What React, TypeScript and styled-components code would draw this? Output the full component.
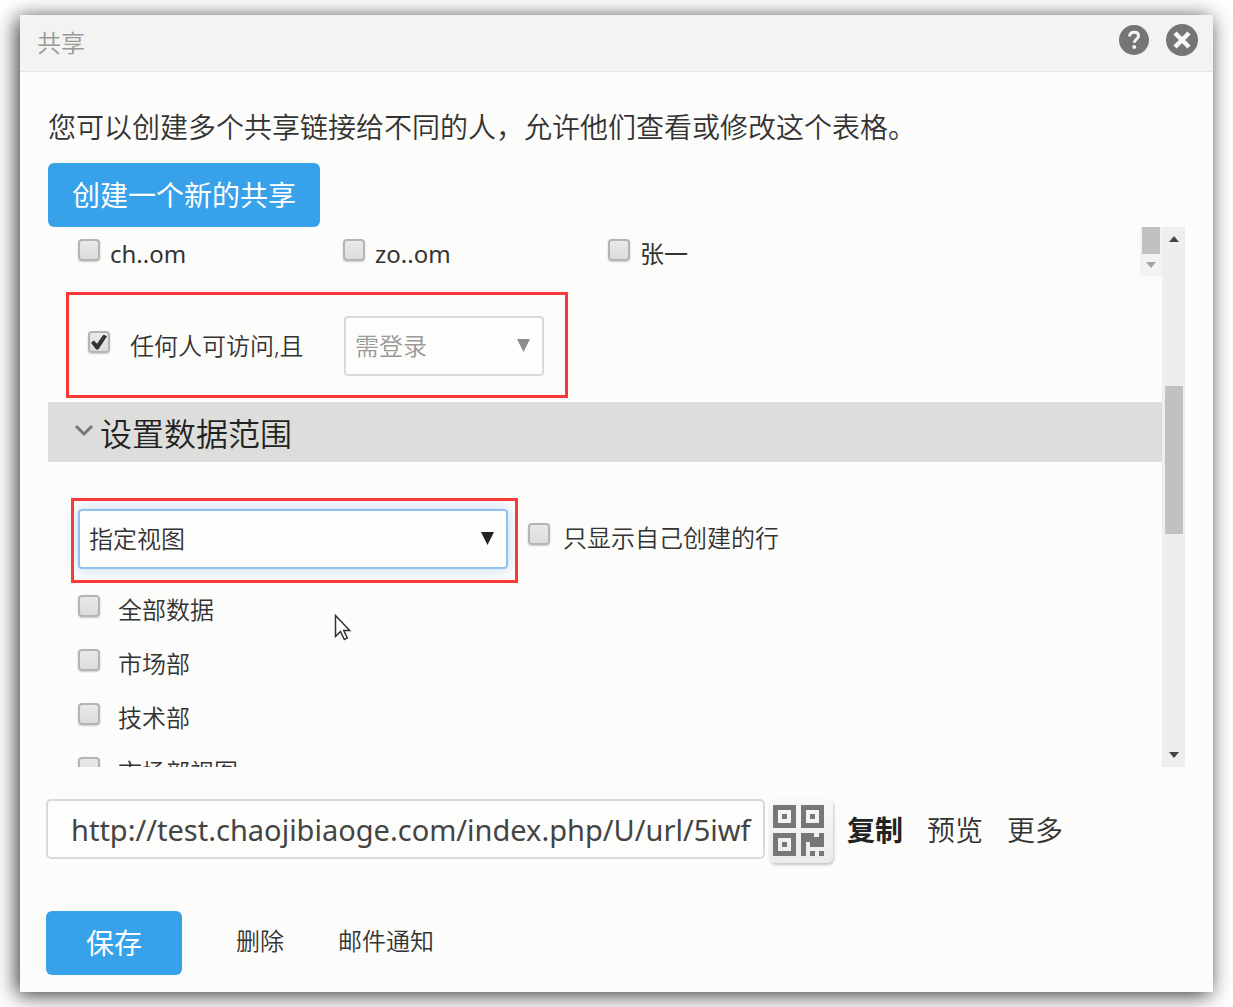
import React from "react";
import styled, { createGlobalStyle, css } from "styled-components";

const GlobalStyle = createGlobalStyle`
  *, *::before, *::after { box-sizing: border-box; }
  body {
    margin: 0;
    background: #fff;
    color: #333;
    font-family: "Noto Sans", "Noto Sans CJK SC", sans-serif;
    font-weight: 350;
    font-size: 24px;
    line-height: 36px;
  }
  button, input, select { font: inherit; color: inherit; }
`;

const Page = styled.div`
  padding: 15px 20px;
`;

const Dialog = styled.main`
  position: relative;
  background: #fcfcfa;
  box-shadow: -3px 3px 20px rgba(0, 0, 0, 0.8);
`;

const Header = styled.header`
  display: flex;
  align-items: center;
  justify-content: space-between;
  height: 57px;
  padding: 0 15px 6px 17px;
  background: #f3f3f1;
  border-bottom: 1px solid #e4e4e2;
`;

const Title = styled.h1`
  margin: 0;
  padding-top: 6px;
  font-size: 24px;
  font-weight: 350;
  color: #999;
`;

const HeaderActions = styled.div`
  display: flex;
  align-items: center;
  gap: 17px;
`;

const IconButton = styled.button<{ $size: number }>`
  display: flex;
  width: ${(p) => p.$size}px;
  height: ${(p) => p.$size}px;
  padding: 0;
  border: 0;
  background: none;
`;

const Body = styled.div`
  padding: 35px 28px 17px 26px;
`;

const Upper = styled.section`
  padding-left: 2px;
`;

const Intro = styled.p`
  margin: 0 0 16px;
  font-size: 28px;
  line-height: 40px;
`;

const PrimaryButton = styled.button<{ $wide?: boolean }>`
  display: block;
  height: 64px;
  padding: 0 ${(p) => (p.$wide ? 40 : 24)}px;
  border: 0;
  border-radius: 6px;
  background: #37a1ea;
  color: #fff;
  font-size: 28px;
  font-weight: 400;
`;

const ScrollPanel = styled.div`
  position: relative;
  display: flex;
  height: 540px;
  overflow: hidden;
`;

const PanelContent = styled.div`
  flex: 1;
  min-width: 0;
`;

const MemberArea = styled.div`
  display: flex;
  height: 65px;
`;

const MemberList = styled.div`
  flex: 1;
  display: grid;
  grid-template-columns: repeat(auto-fill, 265px);
  align-content: start;
  padding: 9px 0 0 30px;
  font-weight: 400;
`;

const CheckLabel = styled.label<{ $gap: number }>`
  display: flex;
  align-items: center;
  gap: ${(p) => p.$gap}px;
  white-space: nowrap;
`;

const CheckBox = styled.input`
  appearance: none;
  flex: none;
  display: grid;
  place-items: center;
  width: 22px;
  height: 22px;
  margin: 0 0 8px;
  border: 2px solid #b4b4b4;
  border-radius: 4px;
  background: linear-gradient(#e9e9e7, #dcdcda);
  box-shadow: 0 1px 2px rgba(0, 0, 0, 0.2);

  &:checked::before {
    content: "";
    width: 16px;
    height: 15px;
    background: #333;
    clip-path: polygon(0 55%, 18% 40%, 38% 62%, 78% 0, 100% 12%, 46% 100%, 32% 100%);
  }
`;

const Marked = styled.div<{ $kind: "access" | "view" }>`
  display: flex;
  align-items: center;
  border: 3px solid #fb3838;
  ${(p) =>
    p.$kind === "access"
      ? css`
          width: 502px;
          height: 106px;
          margin-left: 18px;
          padding: 2px 21px 0 19px;
          justify-content: space-between;
        `
      : css`
          width: 447px;
          height: 85px;
          padding: 0 7px 4px 4px;
        `}
`;

const SelectWrap = styled.div<{ $width?: number }>`
  position: relative;
  ${(p) => (p.$width ? `width: ${p.$width}px;` : "flex: 1;")}
`;

const Select = styled.select<{ $active?: boolean }>`
  appearance: none;
  display: block;
  width: 100%;
  height: 60px;
  padding: 0 40px 0 9px;
  border: 2px solid ${(p) => (p.$active ? "#8fc2ee" : "#d9d9d7")};
  border-radius: 4px;
  outline: 0;
  background: #fdfdfb;
  color: ${(p) => (p.$active ? "#333" : "#999")};
  opacity: 1;
  box-shadow: ${(p) => (p.$active ? "0 0 14px rgba(82, 150, 236, 0.35)" : "none")};
`;

const Arrow = styled.svg<{ $active?: boolean }>`
  position: absolute;
  top: 23px;
  right: 14px;
  fill: ${(p) => (p.$active ? "#222" : "#8c8c8c")};
  pointer-events: none;
`;

const SectionHead = styled.h2`
  display: flex;
  align-items: center;
  gap: 6px;
  height: 60px;
  margin: 4px 0 0;
  padding: 4px 0 0 26px;
  background: #dddddc;
  color: #222;
  font-size: 32px;
  font-weight: 350;
`;

const Chevron = styled.svg`
  margin-bottom: 6px;
`;

const ViewRow = styled.div`
  display: flex;
  align-items: center;
  gap: 10px;
  padding: 36px 0 0 23px;

  > label { padding-bottom: 6px; }
`;

const ViewList = styled.ul`
  margin: 0;
  padding: 0 0 0 30px;
  list-style: none;
`;

const ViewItem = styled.li`
  display: flex;
  align-items: center;
  height: 54px;
`;

const OuterTrack = styled.div`
  display: flex;
  flex-direction: column;
  align-items: center;
  justify-content: space-between;
  width: 23px;
  padding: 9px 0;
  background: #eeeeed;
`;

const OuterThumb = styled.div`
  flex: none;
  width: 18px;
  height: 148px;
  margin-bottom: 74px;
  background: #c1c1c0;
`;

const InnerTrack = styled.div`
  display: flex;
  flex-direction: column;
  align-items: center;
  gap: 8px;
  width: 22px;
  height: 49px;
  background: #f3f3f2;
`;

const InnerThumb = styled.div`
  width: 18px;
  height: 27px;
  background: #c1c1c0;
`;

const Pointer = styled.svg`
  position: absolute;
  left: 286px;
  top: 387px;
`;

const LinkRow = styled.div`
  display: flex;
  align-items: flex-start;
  margin-top: 32px;
  font-size: 28px;
`;

const UrlInput = styled.input`
  flex: 0 1 719px;
  min-width: 0;
  height: 60px;
  padding: 0 8px 0 23px;
  border: 2px solid #d9d9d7;
  border-radius: 5px;
  background: #fdfdfb;
  color: #444;
  font-size: 29px;
  font-weight: 400;
`;

const QrButton = styled.button`
  flex: none;
  display: grid;
  place-items: center;
  width: 64px;
  height: 64px;
  margin-left: 4px;
  padding: 0 6px 2px 0;
  border: 0;
  border-radius: 6px;
  background: linear-gradient(#f8f8f6, #ebebea);
  box-shadow: 1px 2px 3px rgba(0, 0, 0, 0.22);
`;

const LinkActions = styled.nav`
  display: flex;
  gap: 24px;
  margin-left: 14px;
  line-height: 62px;
  white-space: nowrap;
`;

const TextLink = styled.a<{ $bold?: boolean }>`
  color: ${(p) => (p.$bold ? "#222" : "#333")};
  font-weight: ${(p) => (p.$bold ? 700 : 350)};
  text-decoration: none;
`;

const Footer = styled.footer`
  display: flex;
  align-items: flex-start;
  gap: 54px;
  margin-top: 48px;
  line-height: 60px;
`;

const Triangle = ({ up, color }: { up?: boolean; color: string }) => (
  <svg width="10" height="6" viewBox="0 0 10 6" fill={color}>
    <path d={up ? "M0 6 5 0l5 6z" : "M0 0h10L5 6z"} />
  </svg>
);

const Finder = ({ x, y }: { x: number; y: number }) => (
  <g transform={`translate(${x} ${y})`}>
    <path fillRule="evenodd" d="M0 0h23v23H0zM5 5v13h13V5z" />
    <rect x="9" y="9" width="5" height="5" />
  </g>
);

const QrIcon = () => (
  <svg width="51" height="51" viewBox="0 0 51 51" fill="#777775">
    <Finder x={0} y={0} />
    <Finder x={28} y={0} />
    <Finder x={0} y={28} />
    <path d="M28 28h13v4h5v-4h5v14H37v-5h-4v14h-5z" />
    <rect x="37" y="46" width="5" height="5" />
    <rect x="46" y="46" width="5" height="5" />
  </svg>
);

const Check = ({ text, gap, checked }: { text: string; gap: number; checked?: boolean }) => (
  <CheckLabel $gap={gap}>
    <CheckBox type="checkbox" defaultChecked={checked} />
    {text}
  </CheckLabel>
);

const members = ["ch..om", "zo..om", "张一"];
const views = ["全部数据", "市场部", "技术部", "市场部视图"];

export default function App() {
  return (
    <Page>
      <GlobalStyle />
      <Dialog>
        <Header>
          <Title>共享</Title>
          <HeaderActions>
            <IconButton $size={30} type="button" aria-label="帮助">
              <svg width="30" height="30" viewBox="0 0 30 30" fill="none">
                <circle cx="15" cy="15" r="15" fill="#757573" />
                <path d="M10.500 11.500c.2-3 2-4.200 4.700-4.200 2.600 0 4.300 1.500 4.300 3.700 0 3.200-4.200 3.200-4.200 6.700" stroke="#f3f3f1" strokeWidth="3" />
                <circle cx="15.200" cy="22" r="2" fill="#f3f3f1" />
              </svg>
            </IconButton>
            <IconButton $size={32} type="button" aria-label="关闭">
              <svg width="32" height="32" viewBox="0 0 32 32">
                <circle cx="16" cy="16" r="16" fill="#757573" />
                <path d="m9 9 14 14M23 9 9 23" stroke="#f8f8f6" strokeWidth="4.500" />
              </svg>
            </IconButton>
          </HeaderActions>
        </Header>
        <Body>
          <Upper>
            <Intro>您可以创建多个共享链接给不同的人，允许他们查看或修改这个表格。</Intro>
            <PrimaryButton type="button">创建一个新的共享</PrimaryButton>
            <ScrollPanel>
              <PanelContent>
                <MemberArea>
                  <MemberList>
                    {members.map((m) => (
                      <Check key={m} text={m} gap={10} />
                    ))}
                  </MemberList>
                  <InnerTrack aria-hidden="true">
                    <InnerThumb />
                    <Triangle color="#a3a3a2" />
                  </InnerTrack>
                </MemberArea>
                <Marked $kind="access">
                  <Check text="任何人可访问,且" gap={20} checked />
                  <SelectWrap $width={200}>
                    <Select aria-label="访问条件" disabled>
                      <option>需登录</option>
                    </Select>
                    <Arrow width="13" height="13" viewBox="0 0 13 13">
                      <path d="M0 0h13L6.500 13z" />
                    </Arrow>
                  </SelectWrap>
                </Marked>
                <SectionHead>
                  <Chevron width="20" height="14" viewBox="0 0 20 14" fill="none" stroke="#777" strokeWidth="3">
                    <path d="m2 2 8 8 8-8" />
                  </Chevron>
                  设置数据范围
                </SectionHead>
                <ViewRow>
                  <Marked $kind="view">
                    <SelectWrap>
                      <Select aria-label="数据视图" $active>
                        <option>指定视图</option>
                      </Select>
                      <Arrow $active width="13" height="13" viewBox="0 0 13 13">
                        <path d="M0 0h13L6.500 13z" />
                      </Arrow>
                    </SelectWrap>
                  </Marked>
                  <Check text="只显示自己创建的行" gap={13} />
                </ViewRow>
                <ViewList>
                  {views.map((v) => (
                    <ViewItem key={v}>
                      <Check text={v} gap={18} />
                    </ViewItem>
                  ))}
                </ViewList>
              </PanelContent>
              <OuterTrack aria-hidden="true">
                <Triangle up color="#444" />
                <OuterThumb />
                <Triangle color="#444" />
              </OuterTrack>
              <Pointer width="18" height="28" viewBox="0 0 18 28" fill="#fff" stroke="#333" strokeWidth="1.500">
                <path d="M1.500 1.500v21l5-5 3.800 8 3-1.500-3.600-7.500h6z" />
              </Pointer>
            </ScrollPanel>
          </Upper>
          <LinkRow>
            <UrlInput
              aria-label="共享链接"
              readOnly
              defaultValue="http://test.chaojibiaoge.com/index.php/U/url/5iwf"
            />
            <QrButton type="button" aria-label="二维码">
              <QrIcon />
            </QrButton>
            <LinkActions>
              <TextLink href="#copy" $bold>复制</TextLink>
              <TextLink href="#preview">预览</TextLink>
              <TextLink href="#more">更多</TextLink>
            </LinkActions>
          </LinkRow>
          <Footer>
            <PrimaryButton type="button" $wide>保存</PrimaryButton>
            <TextLink href="#delete">删除</TextLink>
            <TextLink href="#notify">邮件通知</TextLink>
          </Footer>
        </Body>
      </Dialog>
    </Page>
  );
}
